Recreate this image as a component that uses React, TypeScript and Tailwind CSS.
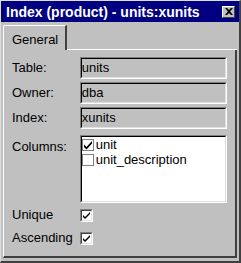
const font = { fontFamily: '"Liberation Sans", Arial, sans-serif' };

const Check = ({ checked }: { checked: boolean }) => (
  <span className="flex w-[13px] h-[13px] shrink-0 items-center justify-center bg-white border-t border-l border-t-[#808080] border-l-[#808080] border-r border-b border-r-white border-b-white">
    <span className="flex w-[11px] h-[11px] items-center justify-center border-t border-l border-t-[#404040] border-l-[#404040] border-r border-b border-r-[#dfdfdf] border-b-[#dfdfdf]">
      {checked && (
        <svg width="9" height="9" viewBox="0 0 9 9">
          <path d="M1 4 L3 6 L8 1 L8 3 L3 8 L1 6 Z" fill="#000" />
        </svg>
      )}
    </span>
  </span>
);

const ListCheck = ({ checked }: { checked: boolean }) => (
  <span className="flex w-[12px] h-[12px] shrink-0 items-center justify-center bg-white border border-[#808080]">
    {checked && (
      <svg width="10" height="10" viewBox="0 0 10 10">
        <path d="M1 4.5 L3.5 7 L9 1 L9 3.5 L3.5 9.5 L1 7 Z" fill="#000" />
      </svg>
    )}
  </span>
);

const Field = ({ label, value }: { label: string; value: string }) => (
  <div className="flex items-center h-[22px]">
    <span className="w-[68px] text-[13px] text-black">{label}</span>
    <div className="flex items-center w-[148px] h-[22px] bg-[#c0c0c0] border-t border-l border-t-[#808080] border-l-[#808080] border-r border-b border-r-white border-b-white">
      <div className="flex items-center w-full h-full border-t border-l border-t-[#000] border-l-[#000] border-r border-b border-r-[#dfdfdf] border-b-[#dfdfdf] text-[13px] text-black">
        {value}
      </div>
    </div>
  </div>
);

export default function App() {
  return (
    <div
      className="w-[241px] h-[263px] bg-[#c0c0c0] border-t border-l border-t-[#dfdfdf] border-l-[#dfdfdf] border-r-2 border-b-2 border-r-[#404040] border-b-[#404040] flex flex-col"
      style={font}
    >
      <div className="flex items-center justify-between h-[21px] bg-[#000080] pl-[5px] pr-[4px]">
        <span className="text-white font-bold text-[14px] leading-none">
          Index (product) - units:xunits
        </span>
        <span className="flex items-center justify-center w-[13px] h-[12px] bg-[#c0c0c0] border-t border-l border-t-white border-l-white border-r border-b border-r-[#404040] border-b-[#404040]">
          <svg width="8" height="7" viewBox="0 0 8 7">
            <path d="M0 0 L2 0 L4 2 L6 0 L8 0 L5 3.5 L8 7 L6 7 L4 5 L2 7 L0 7 L3 3.5 Z" fill="#000" />
          </svg>
        </span>
      </div>
      <div className="flex flex-col px-[2px] pt-[3px] flex-1">
        <div className="flex">
          <div className="w-[64px] h-[25px] pl-[8px] pt-[4px] border-t border-l border-t-white border-l-white border-r-2 border-r-[#404040] rounded-tl-[2px] text-[13px] text-black">
            General
          </div>
        </div>
        <div className="flex flex-col h-[208px] w-[234px] border-l border-l-white border-r-2 border-r-[#404040] border-b-2 border-b-[#404040] px-[8px] pt-[7px] relative">
          <div className="absolute top-[-1px] left-[63px] right-[-2px] h-[1px] bg-white" />
          <div className="flex flex-col gap-[3px]">
            <Field label="Table:" value="units" />
            <Field label="Owner:" value="dba" />
            <Field label="Index:" value="xunits" />
          </div>
          <div className="flex mt-[6px]">
            <span className="w-[68px] text-[13px] text-black pt-[2px]">Columns:</span>
            <div className="w-[148px] h-[68px] bg-white border-t border-l border-t-[#808080] border-l-[#808080] border-r border-b border-r-white border-b-white">
              <div className="w-full h-full border-t border-l border-t-black border-l-black border-r border-b border-r-[#dfdfdf] border-b-[#dfdfdf] flex flex-col">
                <div className="flex items-center gap-[2px] h-[15px] text-[13px] text-black">
                  <ListCheck checked />
                  <span>unit</span>
                </div>
                <div className="flex items-center gap-[2px] h-[15px] text-[13px] text-black">
                  <ListCheck checked={false} />
                  <span>unit_description</span>
                </div>
              </div>
            </div>
          </div>
          <div className="flex flex-col mt-[5px] gap-[9px]">
            <div className="flex items-center h-[14px]">
              <span className="w-[68px] text-[13px] text-black">Unique</span>
              <Check checked />
            </div>
            <div className="flex items-center h-[14px]">
              <span className="w-[68px] text-[13px] text-black">Ascending</span>
              <Check checked />
            </div>
          </div>
        </div>
      </div>
    </div>
  );
}
